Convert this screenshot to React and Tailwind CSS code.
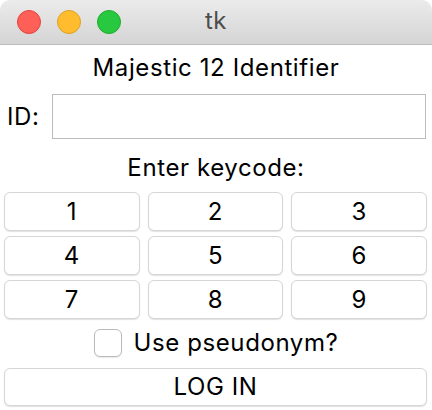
const KEYS = ['1', '2', '3', '4', '5', '6', '7', '8', '9']

function Light({ color }) {
  return <span className={`w-6 h-6 rounded-full border ${color}`} />
}

export default function App() {
  return (
    <div className="w-[432px] h-[410px] bg-white text-black overflow-hidden rounded-t-[10px] font-['Inter','Liberation_Sans',sans-serif] text-[24px] tracking-[0.6px] leading-none">
      <div className="h-[45px] grid grid-cols-[1fr_auto_1fr] items-center bg-gradient-to-b from-[#ebebeb] to-[#d5d5d5] border-b border-[#bdbdbd] px-[17px]">
        <div className="flex items-center gap-4">
          <Light color="bg-[#fe5f57] border-[#e0443e]" />
          <Light color="bg-[#febc2e] border-[#dea123]" />
          <Light color="bg-[#28c840] border-[#1dad2b]" />
        </div>
        <span className="text-[#4d4d4d] pb-[2px]">tk</span>
        <div />
      </div>

      <div className="h-[46px] flex items-center justify-center">Majestic 12 Identifier</div>

      <div className="mt-[3px] h-[45px] flex items-center pl-[7px]">
        <label className="w-[45px]">ID:</label>
        <input className="w-[374px] h-full border border-[#bcbcbc] outline-none px-2" />
      </div>

      <div className="h-[53px] flex items-center justify-center pt-[4px]">Enter keycode:</div>

      <div className="grid grid-cols-3 gap-x-[8px] gap-y-[5px] pl-[4px] pr-[5px]">
        {KEYS.map(k => (
          <button key={k} className="h-[39px] bg-white border border-[#d6d6d6] rounded-[6px] shadow-[0_1px_1px_rgba(0,0,0,0.12)]">
            {k}
          </button>
        ))}
      </div>

      <label className="mt-[10px] h-[28px] flex items-center justify-center gap-3">
        <span className="w-[28px] h-[28px] border border-[#bababa] rounded-[6px] bg-white shadow-[0_1px_1px_rgba(0,0,0,0.08)]" />
        Use pseudonym?
      </label>

      <div className="px-[4px] pr-[5px] mt-[11px]">
        <button className="w-full h-[38px] bg-white border border-[#d6d6d6] rounded-[6px] shadow-[0_1px_1px_rgba(0,0,0,0.12)]">
          LOG IN
        </button>
      </div>
    </div>
  )
}
